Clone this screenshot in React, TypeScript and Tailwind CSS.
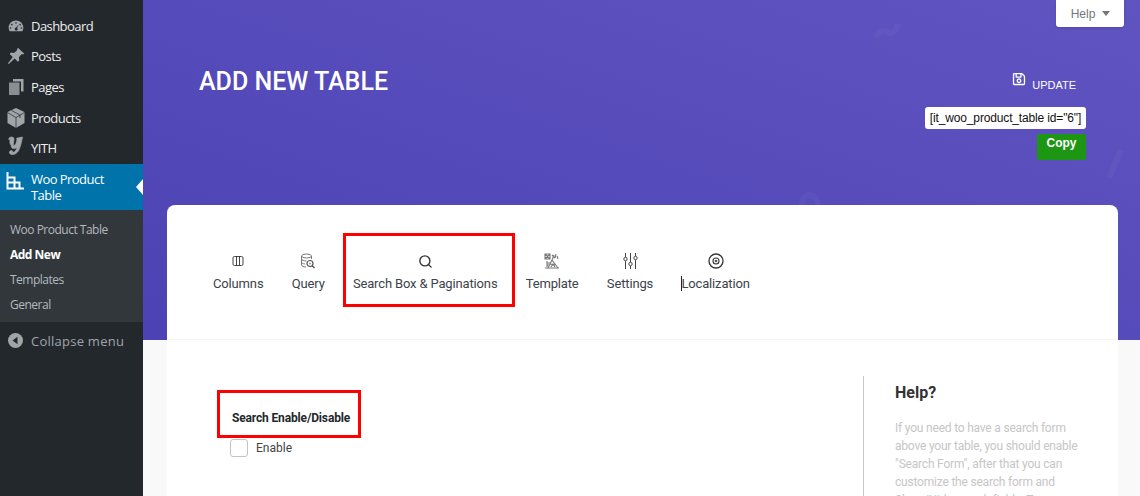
import { Search } from "lucide-react";
import { FaRegSave } from "react-icons/fa";
import type { ReactNode } from "react";

const gray = "#a0a5aa";

const Gauge = () => (
  <svg width="16" height="16" viewBox="0 0 20 20" fill={gray}>
    <path d="M10 3C4.8 3 .8 7 .8 12c0 1.700.5 3.200 1.300 4.500h15.800c.8-1.300 1.300-2.800 1.300-4.500 0-5-4-9-9.200-9zM10 5.200a1 1 0 110 2 1 1 0 010-2zM4.800 7.300a1 1 0 110 2 1 1 0 010-2zM15.200 7.300a1 1 0 110 2 1 1 0 010-2zM3.300 11.500a1 1 0 110 2 1 1 0 010-2zM16.700 11.500a1 1 0 110 2 1 1 0 010-2zM13.400 8l-2 4.400a1.800 1.800 0 11-1.200-.4z" fillRule="evenodd" />
  </svg>
);
const Pin = () => (
  <svg width="18" height="18" viewBox="0 0 20 20" fill={gray}>
    <path d="M12.500 1l6.800 6.500-1.600.9-1.300-.5-3.200 3.600.4 3.400-1.500 1.500-3.600-3.500L2 18.800l-.9-.7 5.300-6.900-3.500-3.500 1.600-1.500 3.400.5 3.500-3.300-.4-1.300z" />
  </svg>
);
const PagesIcon = () => (
  <svg width="16" height="16" viewBox="0 0 16 16" fill={gray}>
    <path d="M5 0h10.500v12.500H13V2.500H5z" />
    <path d="M1 3.500h10.500V16H1z" opacity="0.82" />
  </svg>
);
const BoxIcon = () => (
  <svg width="18" height="20" viewBox="0 0 18 20">
    <path d="M9 0l8.500 4v11L9 20 .5 15V4z" fill={gray} />
    <path d="M.5 4.500L9 9.500l8.500-5M9 9.500V20M4.500 2.500l8.500 4.500v3" fill="none" stroke="#23282d" strokeWidth="0.7" />
  </svg>
);
const YithIcon = () => (
  <svg width="15" height="20" viewBox="0 0 14 18" fill={gray} stroke={gray} strokeWidth="0.7">
    <path d="M1 1.500C2.500.3 5 .2 5.500 2c.3 1.500-.6 4-.6 5.500 0 1 .8 1.200 1.500.6 1.200-1 1.700-3 2-5.500L8 1.800 13.500.6l-.2 1.200c-.8 3.500-1.600 8-3.200 11-1.300 2.600-3.500 4.200-6 4.200-1.500 0-2.800-.8-2.800-2 0-1 .9-1.700 1.800-1.700s1.500.7 1.300 1.600c1 .2 2.300-.5 3.200-2.300.3-.8.600-1.700.7-2.500-1 1-2 1.400-3.100 1.300-1.600-.1-2.400-1.300-2.200-3C1.200 6.500 2 4.500 1.800 3.300 1.700 2.700 1.200 2.600.7 2.900z" />
  </svg>
);
const TableIcon = () => (
  <svg width="18" height="18" viewBox="0 0 18 18" fill="none" stroke="#fff" strokeWidth="2">
    <path d="M1.500 0v16.500H18M1.500 5.500h7v11M1.500 10.500h12v6" />
  </svg>
);
const ColumnsIcon = () => (
  <svg width="12" height="12" viewBox="0 0 12 12" fill="none" stroke="#444" strokeWidth="1">
    <rect x="1" y="1.500" width="10" height="9" rx="1.500" />
    <path d="M4.500 1.500v9M7.500 1.500v9" />
  </svg>
);
const QueryIcon = () => (
  <svg width="16" height="16" viewBox="0 0 16 16" fill="none" stroke="#777" strokeWidth="1">
    <ellipse cx="6.500" cy="3" rx="5" ry="2" />
    <path d="M1.500 3v9c0 1 2 2 4.500 2M11.500 3v3M1.500 6c0 1 2 2 5 2M1.500 9c0 1 1.500 1.800 3.500 2" />
    <circle cx="10" cy="10.500" r="3" strokeWidth="1.200" stroke="#555" />
    <path d="M12.200 12.700l2.300 2.300" strokeWidth="1.400" stroke="#555" />
    <circle cx="10" cy="10.500" r="1" fill="#999" stroke="none" />
  </svg>
);
const TemplateIcon = () => (
  <svg width="16" height="16" viewBox="0 0 16 16" fill="none" stroke="#777" strokeWidth="1.100">
    <path d="M1 1h5v5H1zM1 1l5 5M6 1L1 6M3 8v6M1 15h14M3 10h3M3 12h2" />
    <path d="M4 15l4-8 6 8M8 7l2-5M8 2l3 3M12 1l-1 4M13 3l1 3M6 11l5 1M7 14l2-3 2 3" />
  </svg>
);
const SlidersIcon = () => (
  <svg width="15" height="16" viewBox="0 0 15 16" fill="none" stroke="#444" strokeWidth="1">
    <path d="M2.500 0v4M2.500 8v8M7.500 0v9M7.500 13v3M12.500 0v3M12.500 7v9" />
    <circle cx="2.500" cy="6" r="1.700" />
    <circle cx="7.500" cy="11" r="1.700" />
    <circle cx="12.500" cy="5" r="1.700" />
  </svg>
);
const TargetIcon = () => (
  <svg width="16" height="16" viewBox="0 0 16 16" fill="none" stroke="#333">
    <circle cx="8" cy="8" r="7" strokeWidth="1.300" />
    <circle cx="8" cy="8" r="3" strokeWidth="1.100" />
    <circle cx="8" cy="8" r="1.300" fill="#555" stroke="none" />
  </svg>
);

function MenuItem({ icon, label, h }: { icon: ReactNode; label: string; h: string }) {
  return (
    <div className={`flex items-center ${h}`}>
      <div className="flex w-[31px] justify-center pl-[1px]">{icon}</div>
      <span className="text-[13px] leading-[18px] text-[#eee]">{label}</span>
    </div>
  );
}

function Sidebar() {
  return (
    <aside className="flex w-[143px] shrink-0 flex-col bg-[#23282d] font-['Open_Sans',sans-serif] tracking-[-0.55px]">
      <div className="h-[11px]" />
      <MenuItem icon={<Gauge />} label="Dashboard" h="h-[30px]" />
      <MenuItem icon={<Pin />} label="Posts" h="h-[30px]" />
      <MenuItem icon={<PagesIcon />} label="Pages" h="h-[31px]" />
      <MenuItem icon={<BoxIcon />} label="Products" h="h-[31px]" />
      <MenuItem
        icon={<div className="-mt-[4px] -ml-[2px]"><YithIcon /></div>}
        label="YITH"
        h="h-[30px]"
      />
      <div className="relative mt-[1px] flex h-[46px] items-start bg-[#0073aa] pt-[8px]">
        <div className="flex w-[31px] justify-center pr-[1px]">
          <TableIcon />
        </div>
        <span className="-mt-[1px] w-[90px] text-[13px] leading-[16px] text-white">Woo Product Table</span>
        <div className="absolute top-[15px] right-0 h-0 w-0 border-y-[8px] border-r-[7px] border-y-transparent border-r-white" />
      </div>
      <div className="flex h-[112px] flex-col bg-[#32373c] pt-[7px] pl-[10px] text-[12px] tracking-[-0.5px] text-[#b4b9be]">
        <div className="flex h-[25px] items-center">Woo Product Table</div>
        <div className="flex h-[25px] items-center font-bold text-white">Add New</div>
        <div className="flex h-[25px] items-center">Templates</div>
        <div className="flex h-[25px] items-center">General</div>
      </div>
      <div className="flex h-[39px] items-center pl-[8px] text-[#a0a5aa]">
        <svg width="15" height="15" viewBox="0 0 15 15" className="-mt-[2px]">
          <circle cx="7.500" cy="7.500" r="7.500" fill="#a0a5aa" />
          <path d="M9.500 3.800v7.400L4.500 7.500z" fill="#23282d" />
        </svg>
        <span className="ml-[8px] text-[13px] tracking-[0.25px]">Collapse menu</span>
      </div>
    </aside>
  );
}

function Tab({ icon, label, boxed, caret }: { icon: ReactNode; label: string; boxed?: boolean; caret?: boolean }) {
  return (
    <div className="relative flex flex-col items-center">
      <div className="flex h-[16px] items-center">{icon}</div>
      <span className="mt-[6px] text-[13px] leading-[18px] tracking-[-0.15px] text-[#3c434a]">{label}</span>
      {boxed && <div className="absolute -top-[20px] -right-[18px] -bottom-[14px] -left-[10px] border-[3px] border-[#f00]" />}
      {caret && <div className="absolute top-[23px] left-0 h-[15px] w-[1px] bg-[#222]" />}
    </div>
  );
}

export default function App() {
  return (
    <div className="flex h-[496px] w-[1140px] overflow-hidden bg-[#f9f9f9] font-['Roboto',sans-serif]">
      <Sidebar />
      <main className="relative min-w-0 flex-1">
        <div className="absolute inset-x-0 top-0 h-[340px] bg-gradient-to-tr from-[#4d42b3] to-[#6054c1]">
          <svg className="absolute inset-0 h-full w-full" fill="none" stroke="#fff" strokeOpacity="0.035" strokeWidth="6">
            <path d="M733 38c2-8 8-8 11-6s8 2 11-8" />
            <path d="M659 205c0-12 14-14 16 0" />
            <path d="M966 178l12-28" />
          </svg>
        </div>

        <div className="relative flex flex-col">
          <div className="flex h-[205px] justify-between pr-[16px]">
            <h1 className="pt-[67px] pl-[56px] text-[25px] leading-[30px] font-medium text-white">ADD NEW TABLE</h1>
            <div className="flex flex-col items-end font-['Liberation_Sans',sans-serif]">
              <div className="flex h-[27px] w-[68px] items-center justify-center rounded-b-[3px] bg-white pl-[1px] text-[12px] text-[#72777c] shadow-sm">
                Help
                <span className="ml-[7px] h-0 w-0 border-x-[4px] border-t-[5px] border-x-transparent border-t-[#72777c]" />
              </div>
              <div className="mt-[45px] mr-[48px] flex items-end text-white">
                <FaRegSave size={14} className="mb-[7px]" />
                <span className="ml-[6px] text-[11px] leading-[15px]">UPDATE</span>
              </div>
              <div className="mt-[14px] mr-[38px] flex h-[22px] w-[161px] items-center justify-center rounded-[3px] bg-white text-[12px] tracking-[-0.15px] text-[#111]">
                [it_woo_product_table id="6"]
              </div>
              <div className="mt-[5px] mr-[38px] flex h-[26px] w-[49px] justify-center rounded-[2px] bg-[#1d9614] text-[12px] font-bold text-white">
                Copy
              </div>
            </div>
          </div>

          <div className="mr-[22px] ml-[24px] flex flex-col rounded-t-[8px] bg-white">
            <div className="flex h-[135px] items-start gap-[28.25px] border-b border-[#f4f4f4] pt-[48px] pl-[46px]">
              <Tab icon={<ColumnsIcon />} label="Columns" />
              <Tab icon={<QueryIcon />} label="Query" />
              <Tab icon={<Search size={15} strokeWidth={2.200} color="#333" />} label="Search Box & Paginations" boxed />
              <Tab icon={<TemplateIcon />} label="Template" />
              <Tab icon={<SlidersIcon />} label="Settings" />
              <Tab icon={<TargetIcon />} label="Localization" caret />
            </div>
            <div className="flex h-[156px] pt-[36px]">
              <div className="w-[696px] pl-[50px]">
                <div className="mt-[14px] flex h-[48px] w-[144px] items-end border-[3px] border-[#f00] pb-[9px] pl-[12px]">
                  <span className="text-[12px] leading-[16px] font-bold tracking-[-0.15px] whitespace-nowrap text-[#23282d]">Search Enable/Disable</span>
                </div>
                <div className="mt-[1px] flex items-center pl-[13px]">
                  <span className="h-[18px] w-[18px] rounded-[3px] border border-[#c4c4c4] bg-white" />
                  <span className="ml-[8px] text-[12px] leading-[18px] text-[#444]">Enable</span>
                </div>
              </div>
              <div className="flex-1 border-l border-[#c8c8c8] pl-[31px]">
                <h2 className="mt-[6px] text-[16px] leading-[22px] font-bold text-[#333]">Help?</h2>
                <p className="mt-[15px] w-[190px] text-[12px] leading-[18px] tracking-[-0.2px] text-[#c6c6c6]">
                  If you need to have a search form above your table, you should enable "Search Form", after that you can customize the search form and Show/Hide search fields. To
                </p>
              </div>
            </div>
          </div>
        </div>
      </main>
    </div>
  );
}
